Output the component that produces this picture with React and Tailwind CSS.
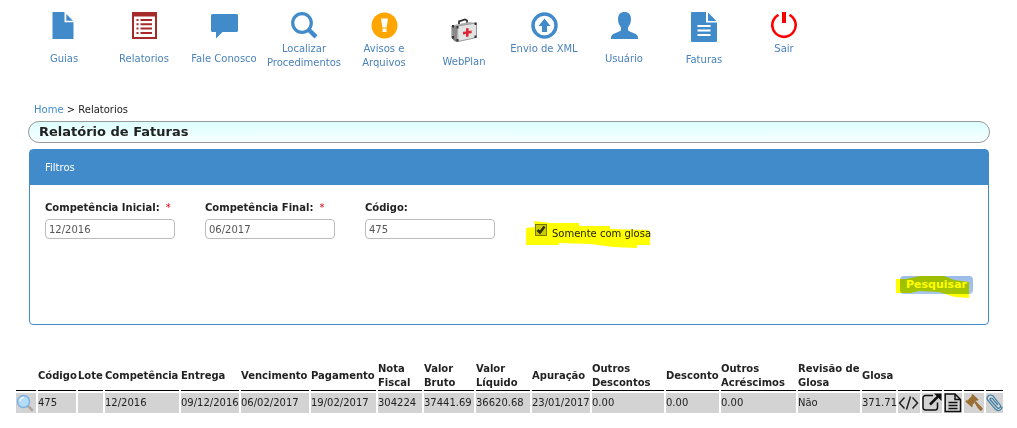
import React from 'react';

function Guias() {
  return (
    <svg className="h-[27px] w-[27px]" viewBox="0 0 27 27" fill="#428bca" aria-hidden="true">
      <path d="M1.500 0h12v10.300h9V27h-21z" />
      <path d="M15.300 2 22 8.700h-6.700z" />
    </svg>
  );
}

function Relatorios() {
  return (
    <svg className="h-[27px] w-[27px]" viewBox="0 0 27 27" fill="#a52a2a" aria-hidden="true">
      <path fillRule="evenodd" d="M1 0h25v27H1zM3 4.500v20.500h21V4.500z" />
      <path d="M5.500 7h2v2h-2zM9.500 7H21v2H9.500zM5.500 11.300h2v2h-2zM9.500 11.300H21v2H9.500zM5.500 15.600h2v2h-2zM9.500 15.600H21v2H9.500zM5.500 20h2v2h-2zM9.500 20H21v2H9.500z" />
    </svg>
  );
}

function Conversa() {
  return (
    <svg className="h-[27px] w-[27px]" viewBox="0 0 27 27" fill="#428bca" aria-hidden="true">
      <path d="M1.500 2h24A1.500 1.500 0 0 1 27 3.500v15a1.500 1.500 0 0 1-1.500 1.500H11.500L5 26.500V20H1.500A1.500 1.500 0 0 1 0 18.500v-15A1.500 1.500 0 0 1 1.500 2z" />
    </svg>
  );
}

function Lupa() {
  return (
    <svg className="h-[27px] w-[27px]" viewBox="0 0 27 27" fill="none" stroke="#428bca" aria-hidden="true">
      <circle cx="11" cy="11" r="9.300" strokeWidth="3.200" />
      <path d="m17.500 17.500 7.500 7.300" strokeWidth="4.500" />
    </svg>
  );
}

function Aviso() {
  return (
    <svg className="h-[27px] w-[27px]" viewBox="0 0 27 27" aria-hidden="true">
      <circle cx="13.500" cy="13.500" r="13" fill="#ffa500" />
      <path d="M10 6.500h7l-1.400 9h-4.200zM11.500 16.500h4v3.500h-4z" fill="#fff" />
    </svg>
  );
}

function Maleta() {
  return (
    <svg className="h-[27px] w-[27px]" viewBox="0 0 27 27" aria-hidden="true">
      <path d="M8 9V6.500L14 4.500l2 1V9" fill="none" stroke="#333" strokeWidth="1.800" />
      <path d="m1 11 5-1.500v18L2 25z" fill="#888" />
      <path d="m1 10.500 17-3.500 7.500 1-19 3.500z" fill="#b0b2b2" />
      <path d="m6.500 11 19-3v14.500l-18 4.500z" fill="#e2e4e4" />
      <path d="m6.500 11 19-3v14.500L7 26.500z" fill="none" stroke="#999" />
      <path d="M1 11v12l5.500 3.500" fill="none" stroke="#777" />
      <path d="M1 10h2v2.500H1zM5.500 11h2v2.500h-2zM23.500 7.500h2V10h-2zM5.500 24h2v2.500h-2zM23.500 20.500h2V23h-2zM1 21h2v2.500H1z" fill="#333" />
      <path d="m15 13.400 2.600-.4v3l3-.4v2.600l-3 .4v3l-2.600.4v-3l-3 .4v-2.600l3-.4z" fill="#dc2630" />
    </svg>
  );
}

function Envio() {
  return (
    <svg className="h-[27px] w-[27px]" viewBox="0 0 27 27" aria-hidden="true">
      <circle cx="13.500" cy="13.500" r="11.500" fill="none" stroke="#428bca" strokeWidth="3.500" />
      <path d="m13.500 6.500 6 7.500h-3.500v6h-5v-6H7.500z" fill="#428bca" />
    </svg>
  );
}

function Usuario() {
  return (
    <svg className="h-[27px] w-[27px]" viewBox="0 0 27 27" fill="#428bca" aria-hidden="true">
      <path d="M13.500 0C17.500 0 20 2.500 20 7c0 3.500-1.200 6-3 8.500v2c0 1 .8 1.500 1.800 2l5.400 2.300c1.800.8 2.800 2.200 2.800 4V27H0v-1.200c0-1.800 1-3.200 2.800-4l5.400-2.300c1-.5 1.800-1 1.800-2v-2C8.200 13 7 10.500 7 7c0-4.500 2.500-7 6.500-7z" />
    </svg>
  );
}

function Faturas() {
  return (
    <svg className="h-[30px] w-[26px]" viewBox="0 0 26 30" aria-hidden="true">
      <path d="M1 0h14v10.500h11V29a1 1 0 0 1-1 1H1a1 1 0 0 1-1-1V1a1 1 0 0 1 1-1z" fill="#428bca" />
      <path d="M17 .5 25.500 9H17z" fill="#428bca" />
      <path d="M6.500 13h13v2h-13zM6.500 17.500h13v2h-13zM6.500 22h13v2h-13z" fill="#fff" />
    </svg>
  );
}

function Sair() {
  return (
    <svg className="h-[27px] w-[27px]" viewBox="0 0 27 27" fill="none" stroke="#f00" aria-hidden="true">
      <path d="M7.500 2.800a11.700 11.700 0 1 0 11 0" strokeWidth="2.600" />
      <path d="M13 0v11" strokeWidth="4" />
    </svg>
  );
}

const menu = [
  { label: 'Guias', Icon: Guias, slot: 'h-[40px]' },
  { label: 'Relatorios', Icon: Relatorios, slot: 'h-[40px]' },
  { label: 'Fale Conosco', Icon: Conversa, slot: 'h-[40px]' },
  { label: 'Localizar Procedimentos', Icon: Lupa, slot: 'h-[30px]' },
  { label: 'Avisos e Arquivos', Icon: Aviso, slot: 'h-[30px]' },
  { label: 'WebPlan', Icon: Maleta, slot: 'h-[43px] pt-[3px]' },
  { label: 'Envio de XML', Icon: Envio, slot: 'h-[30px]' },
  { label: 'Usuário', Icon: Usuario, slot: 'h-[40px]' },
  { label: 'Faturas', Icon: Faturas, slot: 'h-[41px]' },
  { label: 'Sair', Icon: Sair, slot: 'h-[30px]' },
];

const columns = [
  { head: '', value: '', width: 'w-[20px]' },
  { head: 'Código', value: '475', width: 'w-[38px]' },
  { head: 'Lote', value: '', width: 'w-[25px]' },
  { head: 'Competência', value: '12/2016', width: 'w-[74px]' },
  { head: 'Entrega', value: '09/12/2016', width: 'w-[58px]' },
  { head: 'Vencimento', value: '06/02/2017', width: 'w-[68px]' },
  { head: 'Pagamento', value: '19/02/2017', width: 'w-[65px]' },
  { head: 'Nota Fiscal', value: '304224', width: 'w-[44px]' },
  { head: 'Valor Bruto', value: '37441.69', width: 'w-[50px]' },
  { head: 'Valor Líquido', value: '36620.68', width: 'w-[54px]' },
  { head: 'Apuração', value: '23/01/2017', width: 'w-[58px]' },
  { head: 'Outros Descontos', value: '0.00', width: 'w-[72px]' },
  { head: 'Desconto', value: '0.00', width: 'w-[53px]' },
  { head: 'Outros Acréscimos', value: '0.00', width: 'w-[75px]' },
  { head: 'Revisão de Glosa', value: 'Não', width: 'w-[62px]' },
  { head: 'Glosa', value: '371.71', width: 'w-[34px]' },
];

function Detalhe() {
  return (
    <svg className="h-[18px] w-[18px]" viewBox="0 0 18 18" aria-hidden="true">
      <path d="m12 12 4 4" stroke="#b0a8a0" strokeWidth="2.500" strokeLinecap="round" />
      <circle cx="7.500" cy="7.500" r="6" fill="#b5dcf8" stroke="#7fb2e0" strokeWidth="1.500" />
      <path d="M4 7a4 4 0 0 1 4-3.500" stroke="#e8f6ff" strokeWidth="1.500" fill="none" />
    </svg>
  );
}

function Codigo() {
  return (
    <svg className="h-[20px] w-[22px]" viewBox="0 0 22 20" fill="none" stroke="#222" strokeWidth="1.500" aria-hidden="true">
      <path d="M6.500 4.500 1.500 10l5 5.500M14.500 4.500l5 5.500-5 5.500M12.500 3.500 8.500 16.500" />
    </svg>
  );
}

function Abrir() {
  return (
    <svg className="h-[20px] w-[20px]" viewBox="0 0 20 20" fill="none" stroke="#111" aria-hidden="true">
      <path d="M11 2.500H3.500A2.500 2.500 0 0 0 1 5v9.500A2.500 2.500 0 0 0 3.500 17H13a2.500 2.500 0 0 0 2.500-2.500V9.500" strokeWidth="1.500" />
      <path d="m8 11.500 8.500-8.500" strokeWidth="2.500" />
      <path d="M12 .5h7.500V8z" fill="#111" stroke="none" />
    </svg>
  );
}

function Documento() {
  return (
    <svg className="h-[20px] w-[18px]" viewBox="0 0 18 20" fill="none" stroke="#111" strokeWidth="1.500" aria-hidden="true">
      <path d="M1.200 1H11l5.500 5.500V18.500H1.200zM11 1v5.500h5.500M4.500 9.500h9M4.500 12.500h9M4.500 15.500h9" />
    </svg>
  );
}

function Martelo() {
  return (
    <svg className="h-[20px] w-[20px]" viewBox="0 0 20 20" fill="#9b6f34" aria-hidden="true">
      <path d="m8.500 1 6 5.500-1 1.200-1-.3-4 4.600.3 1.200-1 1-6.500-5.700 1-1.200 1.200.3 4.200-4.500L7.500 2z" />
      <path d="m10.500 9.500 1.500-1.300 3 3.300 3.500 3.500c.8 1.500-1 3.300-2.500 2.500L13 14z" />
    </svg>
  );
}

function Anexo() {
  return (
    <svg className="h-[20px] w-[17px]" viewBox="0 0 17 20" fill="none" stroke="#3f7fa5" strokeWidth="1.200" strokeLinecap="round" aria-hidden="true">
      <path d="m4 6.500 7 8c2 2 4.600-.3 3.200-2.500L7 3C4 .5-.2 3.500 1.500 7l8 9.300c3 2.700 6.500.7 6.500-2.300M11.500 11.500 6.500 5.700C5.300 4.800 3.700 5.500 4 6.500" />
    </svg>
  );
}

const actions = [
  { label: 'XML', Icon: Codigo, width: 'w-[22px]' },
  { label: 'Abrir', Icon: Abrir, width: 'w-[20px]' },
  { label: 'Documento', Icon: Documento, width: 'w-[18px]' },
  { label: 'Recurso', Icon: Martelo, width: 'w-[20px]' },
  { label: 'Anexos', Icon: Anexo, width: 'w-[17px]' },
];

function Campo({ id, label, value, required }) {
  return (
    <div className="w-[160px]">
      <label htmlFor={id} className="mb-1 block font-bold">
        {label}
        {required && <span className="ml-[6px] font-normal text-red-600">*</span>}
      </label>
      <input
        id={id}
        type="text"
        defaultValue={value}
        className="block h-5 w-[130px] rounded border border-[#bbb] bg-white px-[3px] text-[#555]"
      />
    </div>
  );
}

export default function App() {
  return (
    <div className="bg-white pb-4 font-['DejaVu_Sans',Verdana,sans-serif] text-[10px] leading-[14px] text-[#222]">
      <nav className="flex h-[103px] pl-6 pt-3" aria-label="Menu principal">
        {menu.map(({ label, Icon, slot }) => (
          <a key={label} href="#" className="flex w-20 flex-col items-center text-center text-[#4a82bb]">
            <span className={`flex items-start ${slot}`}>
              <Icon />
            </span>
            <span>{label}</span>
          </a>
        ))}
      </nav>

      <main>
        <div className="pl-[28px] pr-[27px]">
          <div className="mb-1 pl-[6px]">
            <a href="#" className="text-[#428bca]">Home</a> &gt; Relatorios
          </div>
          <h1 className="mb-[6px] rounded-full border border-[#999] bg-linear-to-b from-[#dff] to-[#f6ffff] px-[10px] text-[13px] font-bold leading-5">
            Relatório de Faturas
          </h1>
          <form className="mx-px rounded border border-[#428bca]" onSubmit={(e) => e.preventDefault()}>
            <h2 className="bg-[#428bca] px-[15px] pb-[10px] pt-[11px] text-white">Filtros</h2>
            <div className="px-[15px] pb-[30px] pt-4">
              <div className="flex">
                <Campo id="inicial" label="Competência Inicial:" value="12/2016" required />
                <Campo id="final" label="Competência Final:" value="06/2017" required />
                <Campo id="codigo" label="Código:" value="475" />
                <div className="relative pl-[10px] pt-[23px]">
                  <label className="flex items-start gap-[5px]">
                    <span className="relative h-3 w-3">
                      <input
                        type="checkbox"
                        defaultChecked
                        className="peer block h-3 w-3 appearance-none border border-[#777] bg-[#ccc]"
                      />
                      <svg className="pointer-events-none absolute inset-0 hidden h-3 w-3 peer-checked:block" viewBox="0 0 12 12" fill="none" stroke="#333" strokeWidth="2.600" aria-hidden="true">
                        <path d="m2.500 6 2.500 2.500 4.500-6" />
                      </svg>
                    </span>
                    <span className="pt-[3px]">Somente com glosa</span>
                  </label>
                  <svg className="pointer-events-none absolute left-0 top-5 h-[28px] w-[126px] mix-blend-multiply" viewBox="0 0 126 28" fill="#ff0" aria-hidden="true">
                    <path d="M9 0 26 2h28v3l31 0 0 3 38 1 2 1v14h-13v3l-24-1-22-3-32-1v2l-33 0V7l9-1z" />
                  </svg>
                </div>
              </div>
              <div className="mt-[35px] flex justify-end">
                <div className="relative">
                  <button type="submit" className="block h-[18px] rounded bg-linear-to-b from-[#9cbce8] to-[#a6c6ee] px-[6px] text-[11px] font-bold text-white">
                    Pesquisar
                  </button>
                  <svg className="pointer-events-none absolute -left-1 top-0 h-[23px] w-[76px] mix-blend-multiply" viewBox="0 0 76 23" fill="#ff0" aria-hidden="true">
                    <path d="M0 3h10l14-3h24l10 4 15 2v16l-14-1-10-3-6-2-20-1-8 2-15 0z" />
                  </svg>
                </div>
              </div>
            </div>
          </form>
        </div>

        <div className="mt-[35px] px-[14px]">
          <table className="w-full table-fixed border-separate border-spacing-[2px] text-left">
            <colgroup>
              {columns.map((c) => (
                <col key={c.head} className={c.width} />
              ))}
              {actions.map((a) => (
                <col key={a.label} className={a.width} />
              ))}
            </colgroup>
            <thead>
              <tr>
                {columns.map((c) => (
                  <th key={c.head} scope="col" className="border-b border-black p-0 align-middle font-bold">
                    {c.head}
                  </th>
                ))}
                {actions.map((a) => (
                  <th key={a.label} scope="col" aria-label={a.label} className="border-b border-black p-0" />
                ))}
              </tr>
            </thead>
            <tbody>
              <tr className="h-5">
                {columns.map((c, i) => (
                  <td key={c.head} className="bg-[#d3d3d3] p-0">
                    {i === 0 ? (
                      <button type="button" aria-label="Detalhes" className="block">
                        <Detalhe />
                      </button>
                    ) : (
                      c.value
                    )}
                  </td>
                ))}
                {actions.map(({ label, Icon }) => (
                  <td key={label} className="bg-[#d3d3d3] p-0">
                    <button type="button" aria-label={label} className="block">
                      <Icon />
                    </button>
                  </td>
                ))}
              </tr>
            </tbody>
          </table>
        </div>
      </main>
    </div>
  );
}
